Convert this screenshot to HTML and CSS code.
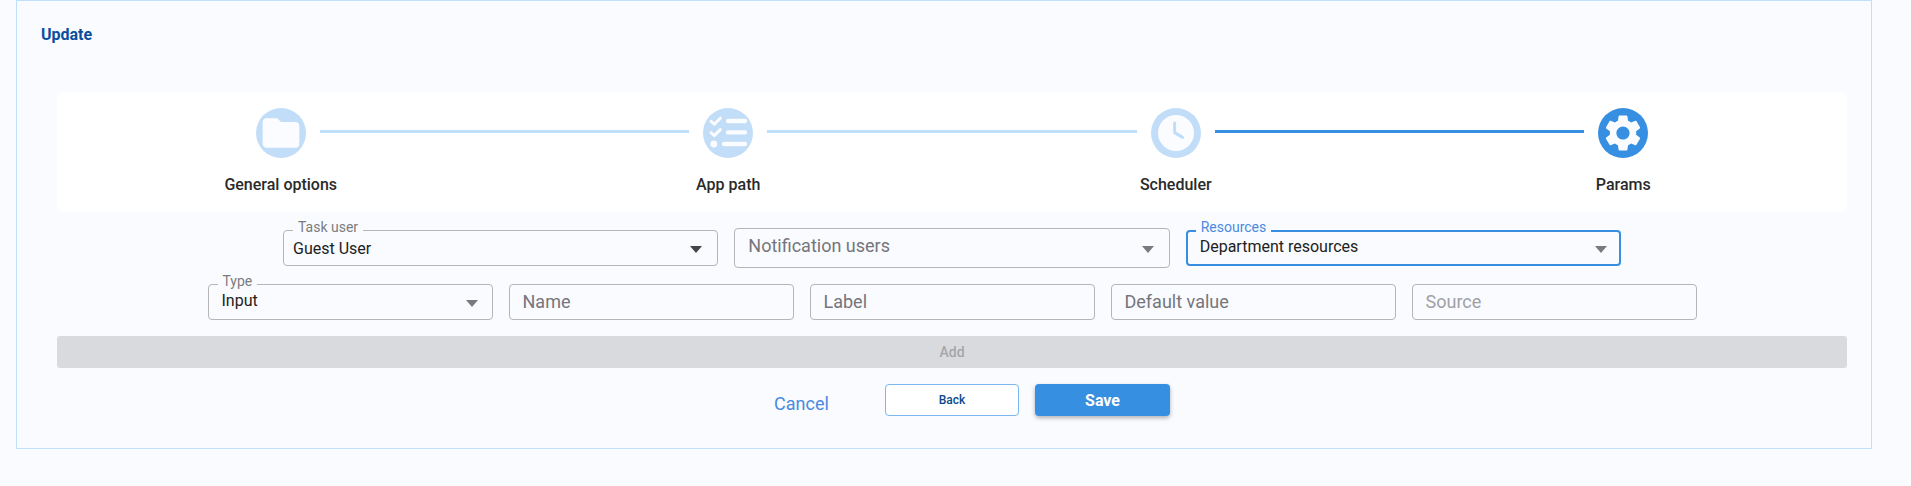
FILE: index.html
```html
<!DOCTYPE html>
<html lang="en">
<head>
<meta charset="utf-8">
<title>Update</title>
<link rel="stylesheet" href="styles.css">
</head>
<body>
<main class="panel">
  <h1 class="title">Update</h1>
  <section class="stepper">
    <div class="step-icons">
      <span class="bubble">
        <svg class="icon" viewBox="0 0 24 24"><path d="M10 4H4c-1.1 0-2 .9-2 2v12c0 1.1.9 2 2 2h16c1.1 0 2-.9 2-2V8c0-1.1-.9-2-2-2h-8l-2-2z"/></svg>
      </span>
      <span class="connector"></span>
      <span class="bubble">
        <svg class="glyph" viewBox="0 0 50 50">
          <g class="glyph-lines">
            <path d="M8 13.3l3.3 2.9 6-6M8 24.7l3.3 2.9 6-6"/>
            <path class="bar" d="M25 13h17M25 24.4h17M21 36h21"/>
          </g>
          <circle class="glyph-dot" cx="10.8" cy="36" r="3.4"/>
        </svg>
      </span>
      <span class="connector"></span>
      <span class="bubble">
        <svg class="glyph" viewBox="0 0 50 50">
          <circle class="glyph-dot" cx="25" cy="25" r="18"/>
          <path class="clock-hands" d="M23.6 15v9.6l8 4.8"/>
        </svg>
      </span>
      <span class="connector connector-active"></span>
      <span class="bubble bubble-active">
        <svg class="icon" viewBox="0 0 24 24"><path d="M19.14 12.94c.04-.3.06-.61.06-.94 0-.32-.02-.64-.07-.94l2.03-1.58c.18-.14.23-.41.12-.61l-1.92-3.32c-.12-.22-.37-.29-.59-.22l-2.39.96c-.5-.38-1.03-.7-1.62-.94l-.36-2.54c-.04-.24-.24-.41-.48-.41h-3.84c-.24 0-.43.17-.47.41l-.36 2.54c-.59.24-1.13.57-1.62.94l-2.39-.96c-.22-.08-.47 0-.59.22L2.74 8.87c-.12.21-.08.47.12.61l2.03 1.58c-.05.3-.09.63-.09.94s.02.64.07.94l-2.03 1.58c-.18.14-.23.41-.12.61l1.92 3.32c.12.22.37.29.59.22l2.39-.96c.5.38 1.03.7 1.62.94l.36 2.54c.05.24.24.41.48.41h3.84c.24 0 .44-.17.47-.41l.36-2.54c.59-.24 1.13-.56 1.62-.94l2.39.96c.22.08.47 0 .59-.22l1.92-3.32c.12-.22.07-.47-.12-.61l-2.01-1.58zM12 15.6c-1.98 0-3.6-1.62-3.6-3.6s1.62-3.6 3.6-3.6 3.6 1.62 3.6 3.6-1.62 3.6-3.6 3.6z"/></svg>
      </span>
    </div>
    <div class="step-labels">
      <span>General options</span>
      <span>App path</span>
      <span>Scheduler</span>
      <span>Params</span>
    </div>
  </section>

  <div class="form-row form-row-top">
    <div class="field field-wide">
      <span class="float-label">Task user</span>
      <span class="value value-lowered">Guest User</span>
      <span class="caret caret-dark"></span>
    </div>
    <div class="field field-wide field-tall">
      <span class="placeholder placeholder-raised">Notification users</span>
      <span class="caret"></span>
    </div>
    <div class="field field-wide field-focus">
      <span class="float-label float-label-focus">Resources</span>
      <span class="value value-raised">Department resources</span>
      <span class="caret"></span>
    </div>
  </div>

  <div class="form-row">
    <div class="field field-small">
      <span class="float-label">Type</span>
      <span class="value value-raised">Input</span>
      <span class="caret"></span>
    </div>
    <div class="field field-small"><span class="placeholder">Name</span></div>
    <div class="field field-small"><span class="placeholder">Label</span></div>
    <div class="field field-small"><span class="placeholder">Default value</span></div>
    <div class="field field-small"><span class="placeholder placeholder-light">Source</span></div>
  </div>

  <button class="add-btn" type="button">Add</button>

  <div class="actions">
    <button class="btn btn-cancel" type="button">Cancel</button>
    <button class="btn btn-back" type="button">Back</button>
    <button class="btn btn-save" type="button">Save</button>
  </div>
</main>
</body>
</html>
```

FILE: styles.css
```css
* { box-sizing: border-box; }

html, body {
  margin: 0;
  background: #f9fbff;
}

body {
  font-family: Roboto, "Liberation Sans", sans-serif;
  color: #212121;
  overflow: hidden;
}

.panel {
  width: 1856px;
  height: 449px;
  margin-left: 16px;
  padding: 0 24px;
  border: 1px solid #bfdfff;
  display: flex;
  flex-direction: column;
}

.title {
  margin: 0;
  height: 91px;
  padding-top: 25px;
  font-size: 16px;
  line-height: 18px;
  font-weight: 700;
  color: #0a4f9e;
}

.stepper,
.form-row,
.add-btn,
.actions {
  margin-left: 16px;
}

.stepper {
  height: 120px;
  background: #fff;
  border-radius: 6px;
  padding-top: 16px;
}

.step-icons {
  display: flex;
  align-items: center;
  padding: 0 199px;
  height: 50px;
}

.bubble {
  flex: none;
  width: 50px;
  height: 50px;
  border-radius: 50%;
  background: #c2ddf7;
  display: flex;
  align-items: center;
  justify-content: center;
}

.bubble-active { background: #368fe0; }

.icon {
  width: 44px;
  height: 44px;
  fill: #fbfcff;
}

.glyph {
  width: 50px;
  height: 50px;
}

.glyph-lines path {
  fill: none;
  stroke: #fbfcff;
  stroke-width: 3;
  stroke-linecap: round;
  stroke-linejoin: round;
}

.glyph-lines .bar { stroke-width: 4.4; }

.glyph-dot { fill: #fbfcff; }

.clock-hands {
  fill: none;
  stroke: #c2ddf7;
  stroke-width: 3;
  stroke-linecap: round;
  stroke-linejoin: round;
}

.connector {
  flex: 1;
  height: 3px;
  margin: -3px 14px 0;
  background: #bfdffc;
}

.connector-active { background: #368fe0; }

.step-labels {
  display: grid;
  grid-template-columns: repeat(4, 1fr);
  margin-top: 17px;
  text-align: center;
  font-size: 16px;
  line-height: 20px;
  font-weight: 500;
  color: #2a2a2a;
}

.form-row {
  display: flex;
  justify-content: center;
  align-items: center;
  gap: 16px;
  margin-top: 16px;
}

.form-row-top { height: 40px; }

.field {
  position: relative;
  display: flex;
  align-items: center;
  height: 36px;
  padding: 0 15px 0 9px;
  border: 1px solid #b5b5b8;
  border-radius: 4px;
  flex: none;
}

.field-wide { width: 435.33px; }
.field-small { width: 285px; padding: 0 14px 0 13px; }
.field-tall { height: 40px; padding: 0 15px 0 13px; }

.field-focus {
  border: 2px solid #368fe0;
  padding: 0 12px;
}

.float-label {
  position: absolute;
  top: -12px;
  left: 9px;
  padding: 0 5px;
  background: #f9fbff;
  font-size: 14px;
  line-height: 16px;
  color: #7c7c80;
}

.float-label-focus {
  color: #4a8ae0;
  top: -13px;
  left: 8px;
}

.value {
  font-size: 16px;
  line-height: 20px;
  color: #212121;
}

.value-raised { margin-top: -2px; }
.value-lowered { margin-top: 1px; }

.placeholder {
  font-size: 18px;
  line-height: 22px;
  color: #75757b;
}

.placeholder-raised { margin-top: -4px; }

.placeholder-light { color: #a0a0a5; }

.caret {
  margin-left: auto;
  width: 0;
  height: 0;
  margin-top: 3px;
  border-left: 6px solid transparent;
  border-right: 6px solid transparent;
  border-top: 7px solid #7a7a7a;
}

.caret-dark { border-top-color: #444; }

.add-btn {
  margin-top: 16px;
  height: 32px;
  border: 0;
  border-radius: 3px;
  background: #d9dade;
  color: #a5a6a9;
  font-family: inherit;
  font-size: 14px;
  font-weight: 500;
}

.actions {
  display: flex;
  justify-content: center;
  gap: 16px;
  margin-top: 16px;
}

.btn {
  width: 135px;
  height: 32px;
  padding: 0;
  border-radius: 4px;
  font-family: inherit;
  cursor: pointer;
}

.btn-cancel {
  border: 0;
  background: none;
  padding-top: 6px;
  font-size: 18px;
  color: #4a8ae0;
}

.btn-back {
  width: 134px;
  border: 1px solid #7ab6f0;
  background: #fff;
  color: #0a4a8f;
  font-size: 12px;
  font-weight: 500;
}

.btn-save {
  border: 0;
  background: #368fe0;
  color: #fff;
  font-size: 16px;
  font-weight: 700;
  box-shadow: 0 2px 4px rgba(0, 0, 0, 0.3);
}
```
